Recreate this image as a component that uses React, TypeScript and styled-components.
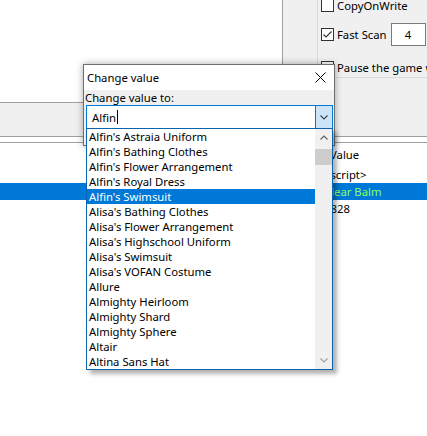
import React from "react";
import styled, { createGlobalStyle } from "styled-components";

const FONT = `"Noto Sans", "Segoe UI", sans-serif`;

const GlobalStyle = createGlobalStyle`
  html, body { margin: 0; padding: 0; background: #fff; }
  body { font-family: ${FONT}; font-size: 11.3px; color: #000; overflow: hidden; }
  * { box-sizing: border-box; }
`;

const Page = styled.div`
  position: relative;
  width: 427px;
  height: 436px;
  overflow: hidden;
  background: #fff;
`;

const Top = styled.div`
  display: flex;
  height: 136px;
`;

const FoundPane = styled.div`
  flex: none;
  width: 283px;
  display: flex;
  flex-direction: column;
`;

const FoundList = styled.div`
  height: 103px;
  background: #fff;
  border-right: 1px solid #a0a0a0;
  border-bottom: 1px solid #a0a0a0;
`;

const Toolbar = styled.div`
  flex: 1;
  background: #f0f0f0;
`;

const RightPane = styled.div`
  flex: 1;
  min-width: 0;
  overflow: hidden;
  background: #f0f0f0;
  padding-left: 34px;
`;

const OptionsGroup = styled.div`
  height: 78px;
  border-left: 1px solid #dadada;
  border-bottom: 1px solid #dadada;
  padding-left: 3px;
  display: flex;
  flex-direction: column;
`;

const OptionRow = styled.div<{ $h: number; $mt: number }>`
  display: flex;
  align-items: center;
  height: ${(p) => p.$h}px;
  margin-top: ${(p) => p.$mt}px;
  white-space: nowrap;
`;

const CheckBox = styled.div`
  width: 13px;
  height: 13px;
  flex: none;
  border: 1px solid #333;
  background: #fff;
  display: flex;
  align-items: center;
  justify-content: center;
`;

const OptionLabel = styled.span`
  margin-left: 3px;
  line-height: 13px;
`;

const NumberBox = styled.div`
  flex: none;
  margin-left: 4px;
  width: 35px;
  height: 23px;
  border: 1px solid #7a7a7a;
  background: #fff;
  display: flex;
  align-items: center;
  justify-content: center;
`;

const Splitter = styled.div`
  height: 7px;
  background: #fff;
  border-top: 1px solid #a0a0a0;
  border-bottom: 1px solid #a0a0a0;
`;

const AddressList = styled.div`
  display: flex;
  flex-direction: column;
`;

const HeaderRow = styled.div`
  display: grid;
  grid-template-columns: 324px 1fr;
  height: 23px;
  align-items: center;
`;

const HeaderCell = styled.span`
  padding-left: 6px;
  white-space: nowrap;
`;

const AddrRow = styled.div<{ $selected?: boolean }>`
  display: grid;
  grid-template-columns: 324px 1fr;
  height: 17px;
  align-items: center;
  background: ${(p) => (p.$selected ? "#0078d7" : "#fff")};
`;

const ValueCell = styled.span<{ $hot?: boolean }>`
  white-space: nowrap;
  color: ${(p) => (p.$hot ? "#86ff62" : "#000")};
`;

const Dialog = styled.div`
  position: absolute;
  left: 83px;
  top: 64px;
  width: 252px;
  height: 82px;
  border: 1px solid #6f6f6f;
  background: #f0f0f0;
  box-shadow: 0 0 7px rgba(0, 0, 0, 0.35);
  display: flex;
  flex-direction: column;
`;

const TitleBar = styled.div`
  height: 25px;
  background: #fff;
  display: flex;
  align-items: center;
  padding-left: 3px;
`;

const TitleText = styled.span`
  flex: 1;
`;

const CloseButton = styled.div`
  width: 28px;
  height: 25px;
  display: flex;
  align-items: center;
  justify-content: center;
`;

const DialogBody = styled.div`
  padding-left: 1px;
`;

const FieldLabel = styled.div`
  height: 15px;
  line-height: 15px;
`;

const Combo = styled.div`
  margin-left: 1px;
  width: 247px;
  height: 24px;
  border: 1px solid #0078d7;
  background: #fff;
  display: flex;
`;

const ComboText = styled.div`
  flex: 1;
  display: flex;
  align-items: center;
  padding-left: 5px;
`;

const Caret = styled.span`
  width: 1px;
  height: 14px;
  background: #000;
  margin-left: 1px;
`;

const DropButton = styled.div`
  width: 17px;
  border-left: 1px solid #0078d7;
  background: #cce4f7;
  display: flex;
  align-items: center;
  justify-content: center;
`;

const DropList = styled.div`
  position: absolute;
  left: 86px;
  top: 128px;
  width: 247px;
  height: 242px;
  border: 1px solid #0a64ad;
  background: #fff;
  display: flex;
  box-shadow: 4px 4px 4px rgba(0, 0, 0, 0.3);
`;

const ListItems = styled.div`
  flex: 1;
  display: flex;
  flex-direction: column;
`;

const ListItem = styled.div<{ $selected?: boolean }>`
  height: 15px;
  line-height: 15px;
  padding-left: 2px;
  white-space: nowrap;
  background: ${(p) => (p.$selected ? "#0078d7" : "transparent")};
  color: ${(p) => (p.$selected ? "#fff" : "#000")};
`;

const ScrollBar = styled.div`
  width: 17px;
  background: #f0f0f0;
  display: flex;
  flex-direction: column;
`;

const ScrollButton = styled.div`
  height: 17px;
  display: flex;
  align-items: center;
  justify-content: center;
`;

const ScrollThumb = styled.div`
  margin-top: 3px;
  height: 16px;
  background: #cdcdcd;
`;

const ScrollTrack = styled.div`
  flex: 1;
`;

const Chevron = ({ up, color }: { up?: boolean; color: string }) => (
  <svg width="8" height="5" viewBox="0 0 8 5">
    <polyline
      points={up ? "0.5,4.5 4,1 7.5,4.5" : "0.5,0.5 4,4 7.5,0.5"}
      fill="none"
      stroke={color}
      strokeWidth="1.1"
    />
  </svg>
);

const items = [
  "Alfin's Astraia Uniform",
  "Alfin's Bathing Clothes",
  "Alfin's Flower Arrangement",
  "Alfin's Royal Dress",
  "Alfin's Swimsuit",
  "Alisa's Bathing Clothes",
  "Alisa's Flower Arrangement",
  "Alisa's Highschool Uniform",
  "Alisa's Swimsuit",
  "Alisa's VOFAN Costume",
  "Allure",
  "Almighty Heirloom",
  "Almighty Shard",
  "Almighty Sphere",
  "Altair",
  "Altina Sans Hat",
];

export default function App() {
  return (
    <Page>
      <GlobalStyle />
      <Top>
        <FoundPane>
          <FoundList />
          <Toolbar />
        </FoundPane>
        <RightPane>
          <OptionsGroup>
            <OptionRow $h={13} $mt={-1}>
              <CheckBox />
              <OptionLabel>CopyOnWrite</OptionLabel>
            </OptionRow>
            <OptionRow $h={23} $mt={11}>
              <CheckBox>
                <svg width="11" height="11" viewBox="0 0 11 11">
                  <polyline points="1.5,5.5 4,8 9.5,2.5" fill="none" stroke="#333" strokeWidth="1.1" />
                </svg>
              </CheckBox>
              <OptionLabel>Fast Scan</OptionLabel>
              <NumberBox>4</NumberBox>
            </OptionRow>
            <OptionRow $h={13} $mt={15}>
              <CheckBox />
              <OptionLabel>Pause the game while scanning</OptionLabel>
            </OptionRow>
          </OptionsGroup>
        </RightPane>
      </Top>
      <Splitter />
      <AddressList>
        <HeaderRow>
          <span />
          <HeaderCell>Value</HeaderCell>
        </HeaderRow>
        <AddrRow>
          <span />
          <ValueCell>&lt;script&gt;</ValueCell>
        </AddrRow>
        <AddrRow $selected>
          <span />
          <ValueCell $hot>Clear Balm</ValueCell>
        </AddrRow>
        <AddrRow>
          <span />
          <ValueCell>1828</ValueCell>
        </AddrRow>
      </AddressList>

      <Dialog>
        <TitleBar>
          <TitleText>Change value</TitleText>
          <CloseButton>
            <svg width="11" height="11" viewBox="0 0 11 11">
              <path d="M0.5 0.5 L10.5 10.5 M10.5 0.5 L0.5 10.5" stroke="#000" strokeWidth="1" />
            </svg>
          </CloseButton>
        </TitleBar>
        <DialogBody>
          <FieldLabel>Change value to:</FieldLabel>
          <Combo>
            <ComboText>
              Alfin
              <Caret />
            </ComboText>
            <DropButton>
              <Chevron color="#404040" />
            </DropButton>
          </Combo>
        </DialogBody>
      </Dialog>

      <DropList>
        <ListItems>
          {items.map((it) => (
            <ListItem key={it} $selected={it === "Alfin's Swimsuit"}>
              {it}
            </ListItem>
          ))}
        </ListItems>
        <ScrollBar>
          <ScrollButton>
            <Chevron up color="#606060" />
          </ScrollButton>
          <ScrollThumb />
          <ScrollTrack />
          <ScrollButton>
            <Chevron color="#a0a0a0" />
          </ScrollButton>
        </ScrollBar>
      </DropList>
    </Page>
  );
}
